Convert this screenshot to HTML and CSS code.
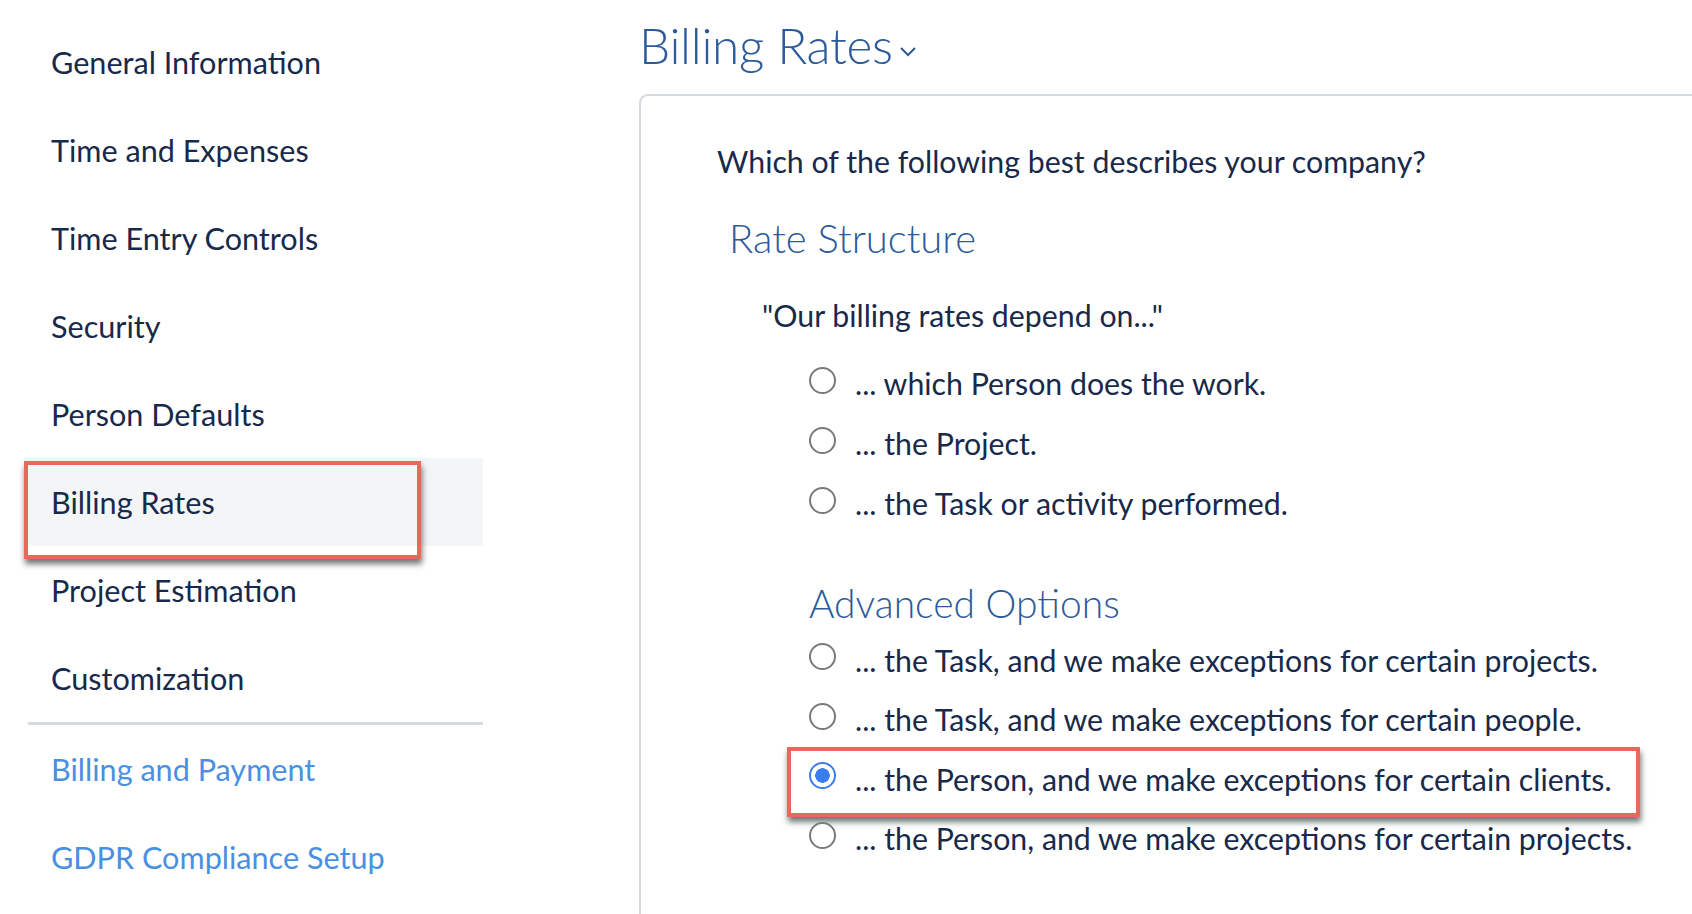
FILE: index.html
```html
<!DOCTYPE html>
<html lang="en">
<head>
  <meta charset="UTF-8" />
  <title>Billing Rates</title>
  <link rel="stylesheet" href="styles.css">
</head>
<body>

  <div class="layout">
    <nav class="sidebar">
      <a class="nav-item">General Information</a>
      <a class="nav-item">Time and Expenses</a>
      <a class="nav-item">Time Entry Controls</a>
      <a class="nav-item">Security</a>
      <a class="nav-item">Person Defaults</a>
      <a class="nav-item current">Billing Rates<span class="callout"></span></a>
      <a class="nav-item">Project Estimation</a>
      <a class="nav-item">Customization</a>
      <div class="nav-divider"></div>
      <a class="nav-item link">Billing and Payment</a>
      <a class="nav-item link">GDPR Compliance Setup</a>
    </nav>

    <main class="main">
      <h1 class="page-title">Billing Rates
        <svg class="chevron" width="18" height="12" viewBox="0 0 18 12"><path d="M2 3 L9 10 L16 3" fill="none" stroke="currentColor" stroke-width="2"/></svg>
      </h1>

      <div class="card">
        <p class="question">Which of the following best describes your company?</p>

        <h2 class="section-title">Rate Structure</h2>
        <p class="quote">"Our billing rates depend on..."</p>

        <div class="options">
          <label class="option"><input type="radio" name="rate" /> ... which Person does the work.</label>
          <label class="option"><input type="radio" name="rate" /> ... the Project.</label>
          <label class="option"><input type="radio" name="rate" /> ... the Task or activity performed.</label>
        </div>

        <h2 class="section-title advanced">Advanced Options</h2>
        <div class="options advanced-options">
          <label class="option"><input type="radio" name="rate" /> ... the Task, and we make exceptions for certain projects.</label>
          <label class="option"><input type="radio" name="rate" /> ... the Task, and we make exceptions for certain people.</label>
          <label class="option picked"><input type="radio" name="rate" checked /> ... the Person, and we make exceptions for certain clients.<span class="callout"></span></label>
          <label class="option"><input type="radio" name="rate" /> ... the Person, and we make exceptions for certain projects.</label>
        </div>
      </div>
    </main>
  </div>

</body>
</html>
```

FILE: styles.css
```css
body {
  margin: 0;
  font-family: Lato, "Open Sans", sans-serif;
  color: #18294a;
  background: #fff;
  overflow: hidden;
}
.layout {
  display: flex;
  height: 914px;
  overflow: hidden;
}
.sidebar {
  width: 459px;
  margin-left: 24px;
  padding-top: 18px;
  flex-shrink: 0;
  display: flex;
  flex-direction: column;
}
.nav-item {
  position: relative;
  display: flex;
  align-items: center;
  height: 88px;
  padding-left: 27px;
  font-size: 30.6px;
  color: #18294a;
}
.nav-item.current {
  background: #f4f5f7;
}
.nav-item.link {
  color: #4a90e2;
}
.nav-divider {
  height: 3px;
  margin-left: 4px;
  background: #d6dae1;
}
.callout {
  position: absolute;
  border: 4px solid #e8685a;
  box-shadow: 1px 5px 6px rgba(0, 0, 0, 0.55);
  pointer-events: none;
}
.nav-item .callout {
  left: 0;
  top: 3px;
  width: 389px;
  height: 90px;
}
.main {
  flex: 1;
  padding-left: 156px;
  min-width: 0;
}
.page-title {
  margin: 0;
  height: 94px;
  display: flex;
  align-items: center;
  padding-bottom: 4px;
  box-sizing: border-box;
  font-size: 49.5px;
  font-weight: 300;
  color: #2c5a9b;
  letter-spacing: -0.3px;
}
.chevron {
  margin-left: 6px;
  margin-top: 12px;
}
.card {
  border: 2px solid #d4d9df;
  border-right: none;
  border-bottom: none;
  border-top-left-radius: 9px;
  height: 818px;
  padding-left: 76px;
}
.question {
  margin: 45px 0 0;
  line-height: 40px;
  font-size: 30.3px;
}
.section-title {
  margin: 32px 0 0 12px;
  line-height: 50px;
  font-size: 40px;
  font-weight: 300;
  color: #2c5a9b;
}
.quote {
  margin: 32px 0 0 45px;
  line-height: 40px;
  font-size: 30.3px;
}
.options {
  margin: 18px 0 0 92px;
  display: flex;
  flex-direction: column;
}
.section-title.advanced {
  margin: 45px 0 0 92px;
  font-size: 39px;
}
.advanced-options {
  margin-top: 2px;
}
.option {
  position: relative;
  display: flex;
  align-items: center;
  height: 60px;
  font-size: 30.3px;
}
.advanced-options .option {
  height: 59.5px;
}
.option input {
  appearance: none;
  margin: -6px 19px 0 0;
  width: 27px;
  height: 27px;
  border: 2px solid #7a7a7a;
  border-radius: 50%;
  background: #fff;
  flex-shrink: 0;
}
.option input:checked {
  border-color: #3b7cf1;
  background: radial-gradient(circle, #3b7cf1 0 7px, #fff 7.5px);
}
.option .callout {
  left: -22px;
  top: -2px;
  width: 845px;
  height: 62px;
}
```
